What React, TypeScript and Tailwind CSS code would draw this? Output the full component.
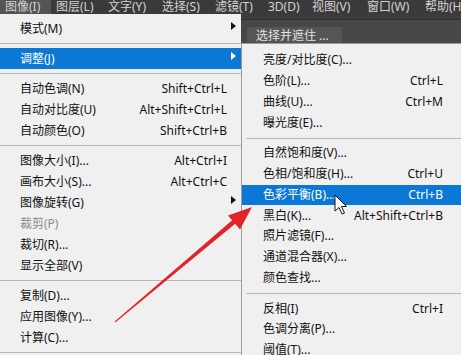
const font = { fontFamily: '"Noto Sans", "Noto Sans CJK SC", sans-serif' };

type Item =
  | { sep: true }
  | { label: string; key?: string; sub?: boolean; active?: boolean; disabled?: boolean; sep?: false };

const leftItems: Item[] = [
  { label: "模式(M)", sub: true },
  { sep: true },
  { label: "调整(J)", sub: true, active: true },
  { sep: true },
  { label: "自动色调(N)", key: "Shift+Ctrl+L" },
  { label: "自动对比度(U)", key: "Alt+Shift+Ctrl+L" },
  { label: "自动颜色(O)", key: "Shift+Ctrl+B" },
  { sep: true },
  { label: "图像大小(I)...", key: "Alt+Ctrl+I" },
  { label: "画布大小(S)...", key: "Alt+Ctrl+C" },
  { label: "图像旋转(G)", sub: true },
  { label: "裁剪(P)", disabled: true },
  { label: "裁切(R)..." },
  { label: "显示全部(V)" },
  { sep: true },
  { label: "复制(D)..." },
  { label: "应用图像(Y)..." },
  { label: "计算(C)..." },
  { sep: true },
];

const rightItems: Item[] = [
  { label: "亮度/对比度(C)..." },
  { label: "色阶(L)...", key: "Ctrl+L" },
  { label: "曲线(U)...", key: "Ctrl+M" },
  { label: "曝光度(E)..." },
  { sep: true },
  { label: "自然饱和度(V)..." },
  { label: "色相/饱和度(H)...", key: "Ctrl+U" },
  { label: "色彩平衡(B)...", key: "Ctrl+B", active: true },
  { label: "黑白(K)...", key: "Alt+Shift+Ctrl+B" },
  { label: "照片滤镜(F)..." },
  { label: "通道混合器(X)..." },
  { label: "颜色查找..." },
  { sep: true },
  { label: "反相(I)", key: "Ctrl+I" },
  { label: "色调分离(P)..." },
  { label: "阈值(T)..." },
];

const menuBar = [
  { t: "图像(I)", w: "w-[51px] pl-[5px] bg-[#545454]" },
  { t: "图层(L)", w: "w-[57px] pl-[5px]" },
  { t: "文字(Y)", w: "w-[54px]" },
  { t: "选择(S)", w: "w-[53px]" },
  { t: "滤镜(T)", w: "w-[53px]" },
  { t: "3D(D)", w: "w-[44px]" },
  { t: "视图(V)", w: "w-[55px]" },
  { t: "窗口(W)", w: "w-[58px]" },
  { t: "帮助(H)", w: "w-[36px]" },
];

function Arrow({ white }: { white?: boolean }) {
  return (
    <svg width="5" height="8" viewBox="0 0 5 8" className="-mt-[5px] ml-[2px]">
      <path d="M0 0L5 4L0 8Z" fill={white ? "#fff" : "#111"} />
    </svg>
  );
}

function Menu({ items, left }: { items: Item[]; left?: boolean }) {
  return (
    <div className="flex flex-col">
      {items.map((it, i) =>
        "label" in it ? (
          <div
            key={i}
            className={
              (left ? "h-[21px] pl-[20px] pr-[5px] " : "h-[20.75px] pl-[21px] pr-[18px] ") +
              "flex items-center text-[12px] " +
              (it.active ? "bg-[#0a78d4] text-white" : it.disabled ? "text-[#8c8c8c]" : "text-[#111]")
            }
          >
            <span className="flex-1 whitespace-nowrap">{it.label}</span>
            {it.key && <span className={"whitespace-nowrap " + (left ? "mr-[9px]" : "")}>{it.key}</span>}
            {it.sub && <Arrow white={it.active} />}
          </div>
        ) : (
          <div key={i} className={left ? "h-[9px] flex items-center" : "h-[10px] flex items-center pl-[4px]"}>
            <div className="h-px w-full bg-[#b5b5b5]" />
          </div>
        )
      )}
    </div>
  );
}

export default function App() {
  return (
    <div style={font} className="relative w-[461px] h-[355px] overflow-hidden bg-[#f0f0f0]">
      <div className="h-[14px] bg-[#3a3a3a] flex text-[12px] leading-[14px] text-[#d2d2d2]">
        {menuBar.map((m) => (
          <div key={m.t} className={"shrink-0 whitespace-nowrap h-full " + m.w}>
            {m.t}
          </div>
        ))}
      </div>

      <div className="flex">
        <div className="w-[241px] shrink-0 pt-[4px] bg-[#f0f0f0]">
          <Menu items={leftItems} left />
        </div>

        <div className="flex-1 flex flex-col">
          <div className="h-[29px] bg-[#3c3c3c] flex flex-col">
            <div className="h-[7px] border-b border-[#2e2e2e]" />
            <div className="flex-1 bg-[#474747] pl-[6px] pt-[7px]">
              <div className="w-[95px] h-[16px] rounded-tl-[3px] bg-[#555555] pl-[9px] text-[12px] leading-[18px] text-[#e2e2e2] whitespace-nowrap overflow-hidden">
                选择并遮住 ...
              </div>
            </div>
          </div>
          <div className="border-l border-t border-[#9a9a9a] bg-[#f0f0f0] pt-[6px] h-[320px]">
            <Menu items={rightItems} />
          </div>
        </div>
      </div>

      <svg className="absolute left-0 top-0 pointer-events-none" width="461" height="355" viewBox="0 0 461 355">
        <polygon points="115.3,322.6 114.7,321.4 233,219.5 235.5,223.5" fill="#e3232b" />
        <polygon points="252,207 228,215.5 240,229.5" fill="#e3232b" />
        <path
          d="M335 195 L335 211 L339 207.5 L342 214 L344.5 213 L341.5 206.5 L346.5 206.5 Z"
          fill="#fff"
          stroke="#111"
          strokeWidth="1"
          strokeLinejoin="round"
        />
      </svg>
    </div>
  );
}
